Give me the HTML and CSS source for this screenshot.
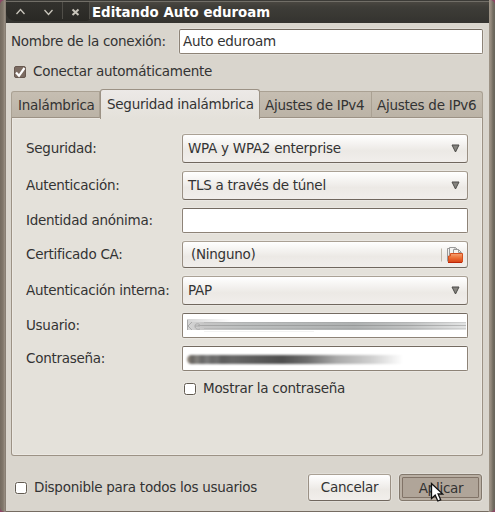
FILE: index.html
```html
<!DOCTYPE html>
<html lang="es">
<head>
<meta charset="utf-8">
<title>Editando Auto eduroam</title>
<link rel="stylesheet" href="styles.css">
</head>
<body>
<main class="window">
  <header class="titlebar">
    <div class="controls">
      <svg width="84" height="19" viewBox="0 0 84 19" fill="none">
        <path d="M56.500 0v17M83.500 0v17" stroke="#504e48"/>
        <path d="M10.500 12l4-4.500 4 4.500M38.500 8l4 4.500 4-4.500" stroke="#c9c5bb" stroke-width="1.300"/>
        <path d="M66.500 7.500l6 5.500M72.500 7.500l-6 5.500" stroke="#c9c5bb" stroke-width="2"/>
      </svg>
    </div>
    <h1>Editando Auto eduroam</h1>
  </header>
  <div class="body">
    <div class="name-row">
      <label class="t-name">Nombre de la conexión:</label>
      <div class="entry">Auto eduroam</div>
    </div>
    <div class="check-row">
      <svg class="tick" width="15" height="15" viewBox="0 0 15 15">
        <rect x="1.500" y="2.500" width="11" height="11" rx="1.500" fill="#7c6c62" stroke="#67584f"/>
        <path d="M3 8.500l3 3.300L11.500 4" fill="none" stroke="#fff" stroke-width="2.200"/>
      </svg>
      <span>Conectar automáticamente</span>
    </div>
    <nav class="tabs">
      <div class="tab first">Inalámbrica</div>
      <div class="tab active">Seguridad inalámbrica</div>
      <div class="tab third">Ajustes de IPv4</div>
      <div class="tab fourth">Ajustes de IPv6</div>
    </nav>
    <section class="panel">
      <label>Seguridad:</label>
      <div class="combo"><span>WPA y WPA2 enterprise</span><svg class="arrow" width="9" height="9" viewBox="0 0 9 9"><path d="M1 1h7L4.500 8z" fill="#85837e" stroke="#4c4b48"/></svg></div>
      <label>Autenticación:</label>
      <div class="combo"><span>TLS a través de túnel</span><svg class="arrow" width="9" height="9" viewBox="0 0 9 9"><path d="M1 1h7L4.500 8z" fill="#85837e" stroke="#4c4b48"/></svg></div>
      <label>Identidad anónima:</label>
      <div class="entry"></div>
      <label>Certificado CA:</label>
      <div class="combo file"><span>(Ninguno)</span>
        <svg class="folder" width="24" height="18" viewBox="0 0 24 18">
          <defs><linearGradient id="f" x2="0" y2="1"><stop stop-color="#f5a374"/><stop offset=".5" stop-color="#ec7136"/><stop offset="1" stop-color="#dc4319"/></linearGradient></defs>
          <path d="M.5 2.500v13" stroke="#c0b8aa"/>
          <path d="M6.500 15.500v-13h4" fill="none" stroke="#999"/>
          <path d="M8.500 12V1.500h6l2 2V12z" fill="#f4f4f2" stroke="#999"/>
          <path d="M12.500 8V3.500h5l2.500 2.500v4" fill="#f4f4f2" stroke="#999"/>
          <path d="M14 1.500v2h3M17.500 3.500v3h3" fill="none" stroke="#999"/>
          <path d="M9.500 7.500h12v8.500h-14v-6h2z" fill="url(#f)" stroke="#d5501f"/>
          <path d="M7 16.500h14" stroke="#bd2508"/>
        </svg>
      </div>
      <label class="t-inner">Autenticación interna:</label>
      <div class="combo"><span>PAP</span><svg class="arrow" width="9" height="9" viewBox="0 0 9 9"><path d="M1 1h7L4.500 8z" fill="#85837e" stroke="#4c4b48"/></svg></div>
      <label>Usuario:</label>
      <div class="entry"><svg class="user" width="280" height="18" viewBox="0 0 280 18">
        <defs>
          <linearGradient id="u"><stop stop-color="#d6d6d6"/><stop offset=".06" stop-color="#c6c6c6"/><stop offset=".2" stop-color="#bcbfbf"/><stop offset=".6" stop-color="#aeb1b1"/><stop offset=".8" stop-color="#c1c3c3"/><stop offset="1" stop-color="#e3e4e4"/></linearGradient>
          <linearGradient id="h"><stop stop-color="#d4d4d4"/><stop offset="1" stop-color="#fff"/></linearGradient>
        </defs>
        <path d="M1 3h45v11H1z" fill="url(#h)"/>
        <path d="M18 15h110v1H18z" fill="#f2f2f2"/>
        <path d="M1 6h279v8H1z" fill="url(#u)"/>
        <path d="M12 9.500h268" stroke="#777" stroke-opacity=".4"/>
        <path d="M18 6.500h262M18 12.500h262" stroke="#888" stroke-opacity=".2"/>
        <path d="M1.500 4v10M6 6l-4 4 4 4M9 10h5c0-3-5-3-5 0s3 4 5 3" fill="none" stroke="#aaa"/>
      </svg></div>
      <label>Contraseña:</label>
      <div class="entry"><div class="pass"></div></div>
      <div class="show"><i class="box"></i><span>Mostrar la contraseña</span></div>
    </section>
    <footer class="footer">
      <i class="box"></i><span class="all">Disponible para todos los usuarios</span>
      <div class="button"><span>Cancelar</span></div>
      <div class="button pressed"><div class="focus">Aplicar</div>
        <svg class="cursor" width="15" height="21" viewBox="0 0 15 21"><path d="M1.500 1.500v15l3.700-3.300 2.600 5.800 2.900-1.200-2.600-5.800h4.600z" fill="#fff" stroke="#111" stroke-width="1.300"/></svg>
      </div>
    </footer>
  </div>
</main>
</body>
</html>
```

FILE: styles.css
```css
* { box-sizing: border-box; }
body {
  margin: 0;
  width: 495px;
  height: 512px;
  overflow: hidden;
  background: #8c4866;
  color: #333;
  font: 13.5px/20px "DejaVu Sans", sans-serif;
  letter-spacing: -0.27px;
  white-space: nowrap;
}
label, .combo span, .show span, .footer span { padding-bottom: 2px; }
.window {
  height: 512px;
  padding: 0 6px 1px;
  border-radius: 5px;
  background: linear-gradient(90deg, #746b60 0, #81776b 3px, #9b9185 5px, #756c62 6px, #756c62 488px, #a09688 489px, #92887c 491px, #736d61 493px, #67645a 495px);
}
.titlebar {
  height: 23px;
  display: flex;
  align-items: center;
  background: linear-gradient(#3c3b37 0 1px, #716e67 1px 2px, #4a4741 2px, #3e3d38 7px, #34332f);
}
.controls {
  width: 84px;
  height: 19px;
  margin-bottom: 1px;
  border-radius: 0 0 4px 9px;
  background: linear-gradient(#33322e, #292824);
}
.controls svg { display: block; }
h1 {
  margin: 2px 0 0 2px;
  color: #fff;
  font-size: 13.33px;
  font-weight: bold;
  letter-spacing: 0;
}
.body {
  height: 488px;
  padding: 6px 6px 0 5px;
  background: #d9d5cd;
}
.name-row { display: flex; align-items: center; height: 25px; }
.t-name { width: 168px; }
.name-row .entry { flex: 1; }
.entry {
  height: 25px;
  padding: 1px 3px;
  border: 1px solid #8d8377;
  border-top-color: #746b61;
  border-radius: 2px;
  background: #fff;
  box-shadow: 0 0 0 1px #ffffff38;
}
.check-row { display: flex; height: 35px; padding: 7px 0 0 2px; }
.tick { margin: 3px 5px 0 0; }
.tabs { display: flex; align-items: flex-end; height: 29px; }
.tab {
  height: 27px;
  padding: 3px 0 0 6px;
  border: 1px solid #aaa193;
  border-left: 0;
  border-bottom: 1px solid #9c9285;
  background: linear-gradient(#c6beb2, #bbb3a6);
}
.first { width: 89px; border-left: 1px solid #aaa193; border-radius: 3px 0 0; }
.active {
  z-index: 1;
  width: 160px;
  height: 30px;
  margin-bottom: -1px;
  padding-top: 4px;
  border: 1px solid #9c9285;
  border-bottom: 0;
  border-radius: 3px 3px 0 0;
  background: linear-gradient(#ece9e7, #e4e1da);
}
.third { width: 112px; padding-left: 5px; }
.fourth { flex: 1; padding-left: 5px; border-radius: 0 3px 0 0; }
.panel {
  height: 338px;
  display: grid;
  grid-template-columns: 156px 286px;
  grid-template-rows: 29px 29px 25px 27px 29px 25px 25px 14px;
  row-gap: 8px;
  align-items: center;
  align-content: start;
  padding: 16px 0 0 14px;
  border: 1px solid #9c9285;
  border-top: 0;
  border-radius: 0 0 3px 3px;
  background: #e4e1da;
  box-shadow: inset 0 0 0 1px #ece9e3;
}
.combo, .button {
  display: flex;
  align-items: center;
  border: 1px solid #9a9084;
  border-top-color: #aaa195;
  border-bottom-color: #70675e;
  border-radius: 3px;
  background: linear-gradient(#fff, #ece9e5 58%, #f1eeeb);
  box-shadow: 0 0 0 1px #ffffff38;
}
.combo {
  height: 29px;
  justify-content: space-between;
  padding: 0 7px 0 5px;
}
.file { height: 27px; padding: 0 2px 0 8px; }
.user { display: block; margin-top: 1px; }
.pass {
  width: 220px;
  height: 9px;
  margin: 7px 0 0 1px;
  border-radius: 5px;
  filter: blur(1px);
  background: linear-gradient(90deg, #9b9184, #656360 5px, #85837f 10px, #666 15px, #7c7c7c 20px, #686868 25px, #707070 30px, #5c5c5c 35px, #666 45px, #555 80px, #4e4e4e 95px, #6d6d6d 120px, #aaa 150px, #d0d0d0 185px, #fff 216px);
}
.show { grid-column: 2; display: flex; align-items: center; padding-left: 2px; margin-top: 5px; }
.box {
  width: 12px;
  height: 12px;
  border: 1px solid #625b51;
  border-radius: 2.5px;
  background: #fff;
  box-shadow: 0 0 0 1px #ffffff38;
}
.show span { margin-left: 7px; }
.footer {
  height: 27px;
  display: flex;
  align-items: center;
  margin-top: 18px;
  padding: 0 1px 0 4px;
}
.all { width: 274px; margin-left: 7px; }
.button { width: 83px; height: 27px; justify-content: center; }
.pressed {
  position: relative;
  margin-left: 8px;
  padding: 2px;
  border-color: #82786c;
  background: #b9afa3;
}
.focus {
  width: 77px;
  height: 21px;
  padding-left: 1px;
  border: 1px solid #817367;
  border-radius: 1px;
  background: #b0a599;
  text-align: center;
  line-height: 20px;
}
.cursor { position: absolute; left: 30px; top: 7px; }
```
